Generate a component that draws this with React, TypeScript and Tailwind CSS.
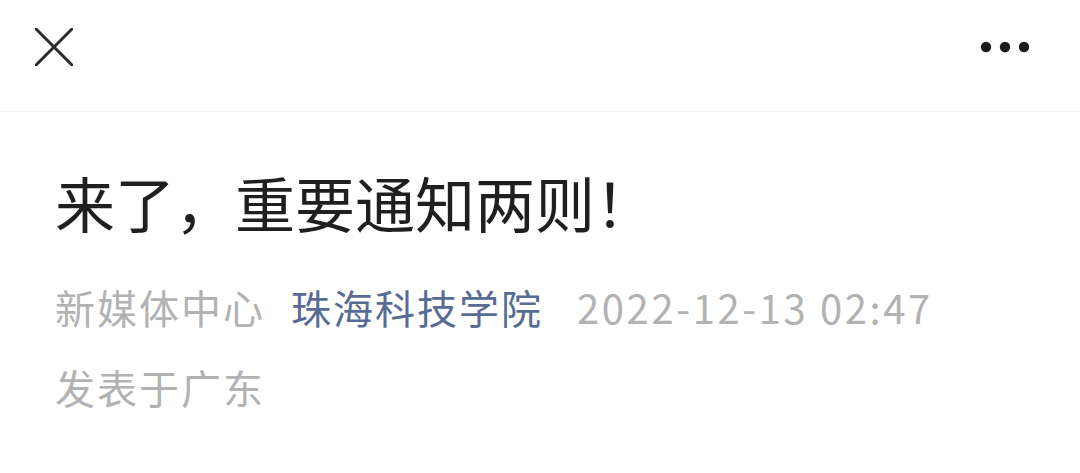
import React from 'react';

const font = { fontFamily: '"Noto Sans CJK SC", "Noto Sans", sans-serif' };

function CloseIcon() {
  return (
    <svg width="38" height="38" viewBox="0 0 38 38" fill="none">
      <path d="M1 1 L37 37 M37 1 L1 37" stroke="#2b2b2b" strokeWidth="3" strokeLinecap="round" />
    </svg>
  );
}

function MoreIcon() {
  return (
    <svg width="50" height="12" viewBox="0 0 50 12">
      <circle cx="6" cy="6" r="5.2" fill="#1a1a1a" />
      <circle cx="25" cy="6" r="5.2" fill="#1a1a1a" />
      <circle cx="44" cy="6" r="5.2" fill="#1a1a1a" />
    </svg>
  );
}

export default function App() {
  return (
    <div className="w-[1080px] h-[473px] bg-white overflow-hidden" style={font}>
      {/* top bar */}
      <header className="h-[112px] border-b border-[#f3f3f3]">
        <div className="h-[94px] flex items-center justify-between pl-[35px] pr-[50px]">
          <CloseIcon />
          <MoreIcon />
        </div>
      </header>

      {/* article head */}
      <div className="px-[55px]">
        <h1 className="mt-[51px] text-[60px] leading-[78px] text-[#1f1f1f] font-normal">
          来了，重要通知两则！
        </h1>
        <div className="mt-[38px] flex items-center text-[40px] leading-[56px] tracking-[2px] text-[#b2b2b2]">
          <span className="mr-[26px]">新媒体中心</span>
          <span className="mr-[34px] text-[#576b95]">珠海科技学院</span>
          <span className="tracking-[2.6px]">2022-12-13 02:47</span>
        </div>
        <div className="mt-[24px] text-[40px] leading-[56px] tracking-[2px] text-[#b2b2b2]">
          发表于广东
        </div>
      </div>
    </div>
  );
}
